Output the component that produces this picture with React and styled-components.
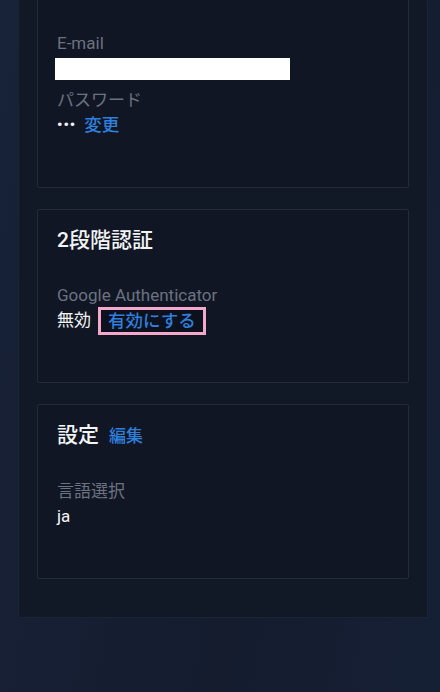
import React from "react";
import styled, { createGlobalStyle } from "styled-components";

const GlobalStyle = createGlobalStyle`
  html, body {
    margin: 0;
    padding: 0;
    height: 100%;
    background: linear-gradient(100deg, #182238 0%, #141c2e 60%, #162035 100%);
    overflow: hidden;
  }
  body {
    font-family: Roboto, "Noto Sans CJK JP", "Noto Sans", sans-serif;
    color: #f3f4f6;
  }
  #root { min-height: 100%; }
`;

const Page = styled.div`
  padding: 0 12px 0 18px;
  margin-top: -75px;
`;

const Panel = styled.div`
  background: #111826;
  border: 1px solid #1b2436;
  border-top: none;
  padding: 32px 18px 38px;
  display: flex;
  flex-direction: column;
  gap: 21px;
`;

const Card = styled.section`
  background: #111624;
  border: 1px solid #222a3b;
  border-radius: 2px;
  padding: ${(p) => (p.$scrolled ? "73px" : "18px")} 19px 49px;
`;

const Title = styled.h2`
  margin: 0 0 31px;
  font-size: 21px;
  line-height: 24px;
  font-weight: 500;
  color: #f3f4f6;
  display: flex;
  align-items: baseline;
  gap: 10px;
`;

const TitleLink = styled.a`
  font-size: 17px;
  font-weight: 500;
  color: #2f7fdc;
  text-decoration: none;
`;

const Field = styled.div`
  & + & {
    margin-top: 7px;
  }
`;

const Label = styled.div`
  font-size: 17px;
  line-height: 25px;
  color: #6b7280;
`;

const Value = styled.div`
  font-size: 17px;
  height: 25px;
  line-height: 25px;
  color: #f3f4f6;
  display: flex;
  align-items: center;
  gap: 8px;
`;

const Redacted = styled.div`
  width: 235px;
  height: 22px;
  background: #ffffff;
  margin-left: -2px;
`;

const Dots = styled.span`
  font-size: 15px;
  letter-spacing: 1px;
  font-weight: 700;
`;

const Link = styled.a`
  color: #2f7fdc;
  text-decoration: none;
  font-weight: 500;
  font-size: 17.5px;
  ${(p) =>
    p.$highlight &&
    `
    border: 3px solid #f4a8cb;
    background: #0c111d;
    padding: 0 7px;
    line-height: 22px;
    margin-left: -1px;
  `}
`;

export default function App() {
  return (
    <>
      <GlobalStyle />
      <Page>
        <Panel>
          <Card $scrolled>
            <Field>
              <Label>E-mail</Label>
              <Value>
                <Redacted />
              </Value>
            </Field>
            <Field>
              <Label>パスワード</Label>
              <Value>
                <Dots>•••</Dots>
                <Link href="#">変更</Link>
              </Value>
            </Field>
          </Card>
          <Card>
            <Title>2段階認証</Title>
            <Field>
              <Label>Google Authenticator</Label>
              <Value>
                <span>無効</span>
                <Link href="#" $highlight>
                  有効にする
                </Link>
              </Value>
            </Field>
          </Card>
          <Card>
            <Title>
              設定 <TitleLink href="#">編集</TitleLink>
            </Title>
            <Field>
              <Label>言語選択</Label>
              <Value>ja</Value>
            </Field>
          </Card>
        </Panel>
      </Page>
    </>
  );
}
